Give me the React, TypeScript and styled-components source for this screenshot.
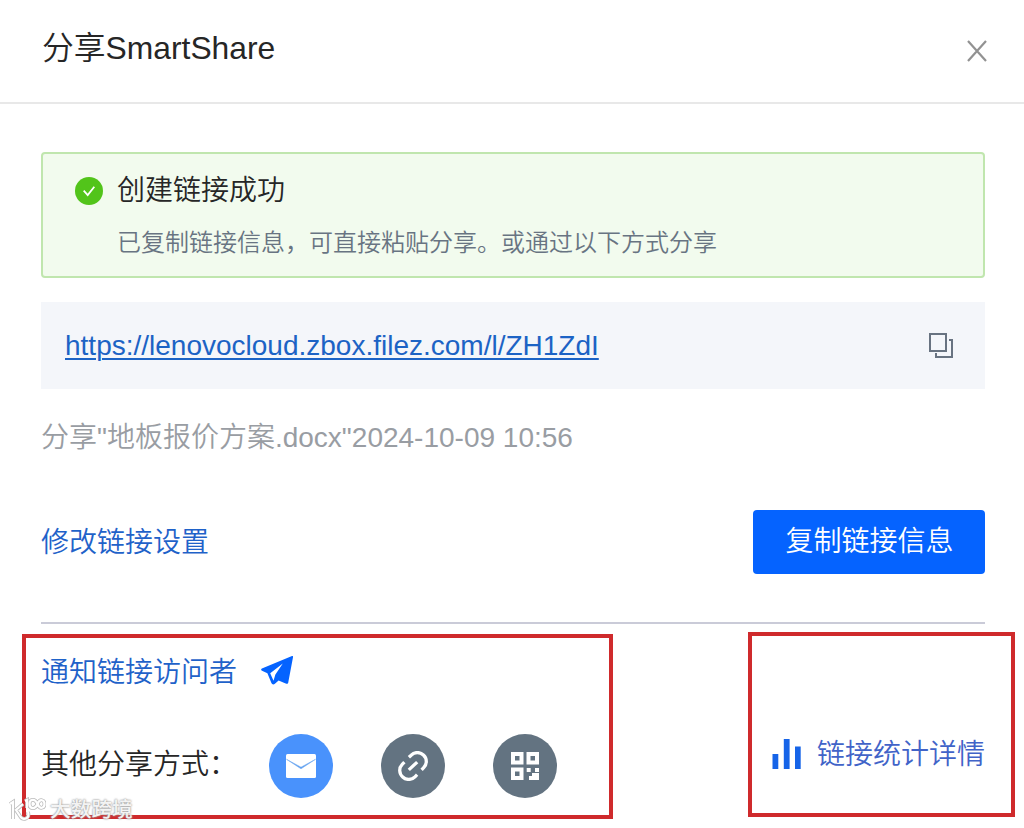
import React from 'react';
import styled, { createGlobalStyle } from 'styled-components';

// TYPES
interface TextProps {
    $color: string;
    $size?: number;
}

interface ShareButtonProps {
    $background: string;
}

interface HighlightProps {
    $left: number;
    $top: number;
    $width: number;
    $height: number;
}

// STYLES
const colors = {
    primary: '#0563ff',
    link: '#1f62c9',
    text: '#262626',
    secondary: '#687482',
    muted: '#999da3',
    slate: '#637381',
    highlight: '#cf2a2c',
};

const GlobalStyle = createGlobalStyle`
    * {
        box-sizing: border-box;
    }

    body {
        margin: 0;
        background: #fff;
        font-family: 'Liberation Sans', 'Noto Sans CJK SC', sans-serif;
        font-weight: 350;
    }

    svg {
        display: block;
    }

    button {
        border: 0;
        padding: 0;
        font-family: inherit;
        font-weight: inherit;
    }
`;

const Dialog = styled.div`
    position: relative;
    width: 1024px;
    height: 828px;
    overflow: hidden;
    background: #fff;
`;

const Header = styled.header`
    display: flex;
    align-items: center;
    justify-content: space-between;
    height: 104px;
    padding: 0 36px 6px 42px;
    border-bottom: 2px solid #e8e8e8;
`;

const Title = styled.h1`
    margin: 0;
    color: ${colors.text};
    font-size: 31.8px;
    font-weight: inherit;
    line-height: 48px;
`;

const CloseButton = styled.button`
    margin-top: 6px;
    background: none;
`;

const Body = styled.main`
    display: flex;
    flex-direction: column;
    padding: 48px 39px 0 41px;
`;

const Text = styled.span<TextProps>`
    color: ${({ $color }) => $color};
    font-size: ${({ $size = 28 }) => $size}px;
    line-height: 40px;
    white-space: nowrap;
`;

const Alert = styled.section`
    display: flex;
    gap: 14px;
    height: 126px;
    padding: 17px 32px;
    border: 2px solid #c0e6ae;
    border-radius: 4px;
    background: #f2fbee;

    > svg {
        margin-top: 6px;
    }
`;

const AlertContent = styled.div`
    display: flex;
    flex-direction: column;
    gap: 12px;
`;

const LinkBox = styled.section`
    display: flex;
    align-items: center;
    justify-content: space-between;
    height: 87px;
    margin-top: 24px;
    padding: 0 31px 0 24px;
    background: #f4f6fa;
`;

const ShareUrl = styled.a`
    color: #1c63c5;
    font-size: 28px;
    line-height: 40px;
    text-decoration: underline;
    text-decoration-thickness: 2px;
    text-underline-offset: 3px;
`;

const FileInfo = styled.div`
    display: flex;
    margin-top: 29px;
`;

const ActionRow = styled.div`
    display: flex;
    align-items: center;
    justify-content: space-between;
    height: 64px;
    margin-top: 52px;

    > span {
        padding-top: 2px;
    }
`;

const CopyButton = styled.button`
    width: 232px;
    height: 64px;
    padding-left: 1px;
    border-radius: 4px;
    background: ${colors.primary};
    color: #fff;
    font-size: 28px;
    line-height: 64px;
`;

const Footer = styled.footer`
    display: flex;
    justify-content: space-between;
    margin-top: 48px;
    border-top: 2px solid #cacbd8;
`;

const FooterColumn = styled.div`
    display: flex;
    flex-direction: column;
    padding-top: 29px;
`;

const NotifyRow = styled.div`
    display: flex;
    align-items: center;
    gap: 24px;
    height: 40px;

    > svg {
        margin-bottom: 6px;
    }
`;

const ShareRow = styled.div`
    display: flex;
    align-items: center;
    height: 64px;
    margin-top: 41px;
`;

const ShareLabel = styled(Text)`
    width: 228px;
    padding-bottom: 2px;
`;

const ShareButtons = styled.div`
    display: flex;
    gap: 48px;
`;

const ShareButton = styled.button<ShareButtonProps>`
    display: flex;
    align-items: center;
    justify-content: center;
    width: 64px;
    height: 64px;
    border-radius: 50%;
    background: ${({ $background }) => $background};
`;

const Stats = styled.div`
    display: flex;
    align-items: center;
    gap: 16px;
    height: 40px;
    margin-top: 111px;

    > svg {
        margin-bottom: 2px;
    }
`;

const Highlight = styled.div<HighlightProps>`
    position: absolute;
    left: ${({ $left }) => $left}px;
    top: ${({ $top }) => $top}px;
    width: ${({ $width }) => $width}px;
    height: ${({ $height }) => $height}px;
    border: 4px solid ${colors.highlight};
    pointer-events: none;
`;

const Watermark = styled.div`
    position: absolute;
    left: 8px;
    top: 795px;
    display: flex;
    align-items: center;
    gap: 4px;
    color: rgba(255, 255, 255, 0.9);
    font-size: 20.7px;
    font-weight: 500;
    line-height: 30px;
    text-shadow: 0 0 2px #999, 0 0 2px #aaa;
`;

// ICONS
const CloseIcon = () => (
    <svg width="22" height="24" viewBox="0 0 22 24" fill="none">
        <path d="M2 2L20 22M20 2L2 22" stroke="#929292" strokeWidth="2.2" />
    </svg>
);

const SuccessIcon = () => (
    <svg width="28" height="28" viewBox="0 0 28 28" fill="none">
        <circle cx="14" cy="14" r="14" fill="#52c41a" />
        <path d="M8.7 13.7L12.7 18L19.3 9.7" stroke="#fff" strokeWidth="1.8" />
    </svg>
);

const CopyIcon = () => (
    <svg width="25" height="25" viewBox="0 0 25 25" fill="none">
        <path
            d="M1 1H17V18H1ZM20 7H23V24H7V20"
            stroke="#687381"
            strokeWidth="2"
        />
    </svg>
);

const PlaneIcon = () => (
    <svg width="32" height="29" viewBox="0 0 32 29">
        <path
            d="M31 .1C31.8-.1 32.2.4 32 1.2L27.2 26.7C27 27.7 26.2 28.1 25.3 27.7L17.6 24.4L13.9 27.8C12.5 29 11.1 28.6 10.4 27.1L6.4 17.2L1 14.8C-.1 14.3-.2 12.9.9 12.4Z"
            fill="#0563ff"
        />
        <path d="M9.2 17.3L21.8 7.6L14.4 18.6L12.5 24.8Z" fill="#fff" />
    </svg>
);

const MailIcon = () => (
    <svg width="30" height="24" viewBox="0 0 30 24" fill="none">
        <rect width="30" height="24" rx="1.5" fill="#fff" />
        <path
            d="M.5 5.3L15 13.2L29.5 5.3L15 14.8Z"
            fill="#5298ef"
            stroke="#76acf1"
            strokeWidth=".6"
        />
    </svg>
);

const ChainIcon = () => (
    <svg width="30" height="30" viewBox="0 0 30 30" fill="none">
        <path
            d="M10.9 6.3L13.2 4.2C16.6.7 21.9.7 25.4 4C29.1 7.4 29.3 13 25.7 16.7L23.6 18.8M19.1 23.7L17 25.8C13.6 29.2 8.1 29.3 4.7 26C1 22.6.7 17 4.2 13.4L6.4 11.2M10.8 18.9L19.2 11.1"
            stroke="#fff"
            strokeWidth="3.3"
        />
    </svg>
);

const QrIcon = () => (
    <svg width="28" height="28" viewBox="0 0 28 28" fill="#fff">
        <path
            fillRule="evenodd"
            d="M0 0H12.5V12.5H0ZM4 4V8.5H8.5V4ZM15.5 0H28V12.5H15.5ZM19.5 4V8.5H24V4ZM0 15.5H12.5V28H0ZM4 19.5V24H8.5V19.5Z"
        />
        <path d="M15.7 16H19.7V20H15.7ZM24 16H28V20H24ZM21 21H28V28H18V24H21Z" />
    </svg>
);

const StatsIcon = () => (
    <svg width="29" height="30" viewBox="0 0 29 30" fill="#1664e8">
        <path d="M.5 15H6.3V30H.5ZM11.8 0H17.6V30H11.8ZM23 7.5H28.7V30H23Z" />
    </svg>
);

const WatermarkIcon = () => (
    <svg width="38" height="26" viewBox="0 0 38 26" fill="none">
        {['#bcbcbc', '#fff'].map((stroke, index) => (
            <path
                key={stroke}
                d="M2 7L5 5V22M15 7L8 13L12 19C15 24 22 22 20 15M17 4L19 3V11M29.5 7C27 1 21.5 2 21.5 7S27 13 29.5 7C32 1 36.5 3 36.5 7S32 13 29.5 7"
                stroke={stroke}
                strokeWidth={index ? 2.2 : 3.8}
            />
        ))}
    </svg>
);

// COMPONENT DEFINITION
const shareUrl = 'https://lenovocloud.zbox.filez.com/l/ZH1ZdI';

const App = (): JSX.Element => (
    <>
        <GlobalStyle />
        <Dialog lang="zh-CN">
            <Header>
                <Title>分享SmartShare</Title>
                <CloseButton aria-label="关闭">
                    <CloseIcon />
                </CloseButton>
            </Header>
            <Body>
                <Alert>
                    <SuccessIcon />
                    <AlertContent>
                        <Text $color={colors.text}>创建链接成功</Text>
                        <Text $color={colors.secondary} $size={24}>
                            已复制链接信息，可直接粘贴分享。或通过以下方式分享
                        </Text>
                    </AlertContent>
                </Alert>
                <LinkBox>
                    <ShareUrl href={shareUrl}>{shareUrl}</ShareUrl>
                    <CopyIcon />
                </LinkBox>
                <FileInfo>
                    <Text $color={colors.muted}>
                        分享"地板报价方案.docx"2024-10-09 10:56
                    </Text>
                </FileInfo>
                <ActionRow>
                    <Text $color={colors.link}>修改链接设置</Text>
                    <CopyButton>复制链接信息</CopyButton>
                </ActionRow>
                <Footer>
                    <FooterColumn>
                        <NotifyRow>
                            <Text $color={colors.link}>通知链接访问者</Text>
                            <PlaneIcon />
                        </NotifyRow>
                        <ShareRow>
                            <ShareLabel $color={colors.text}>
                                其他分享方式：
                            </ShareLabel>
                            <ShareButtons>
                                <ShareButton $background="#4992fc" aria-label="邮件">
                                    <MailIcon />
                                </ShareButton>
                                <ShareButton $background={colors.slate} aria-label="链接">
                                    <ChainIcon />
                                </ShareButton>
                                <ShareButton $background={colors.slate} aria-label="二维码">
                                    <QrIcon />
                                </ShareButton>
                            </ShareButtons>
                        </ShareRow>
                    </FooterColumn>
                    <Stats>
                        <StatsIcon />
                        <Text $color="#4163c8">链接统计详情</Text>
                    </Stats>
                </Footer>
            </Body>
            <Highlight $left={22} $top={634} $width={591} $height={185} />
            <Highlight $left={748} $top={632} $width={267} $height={185} />
            <Watermark>
                <WatermarkIcon />
                大数跨境
            </Watermark>
        </Dialog>
    </>
);

export default App;
